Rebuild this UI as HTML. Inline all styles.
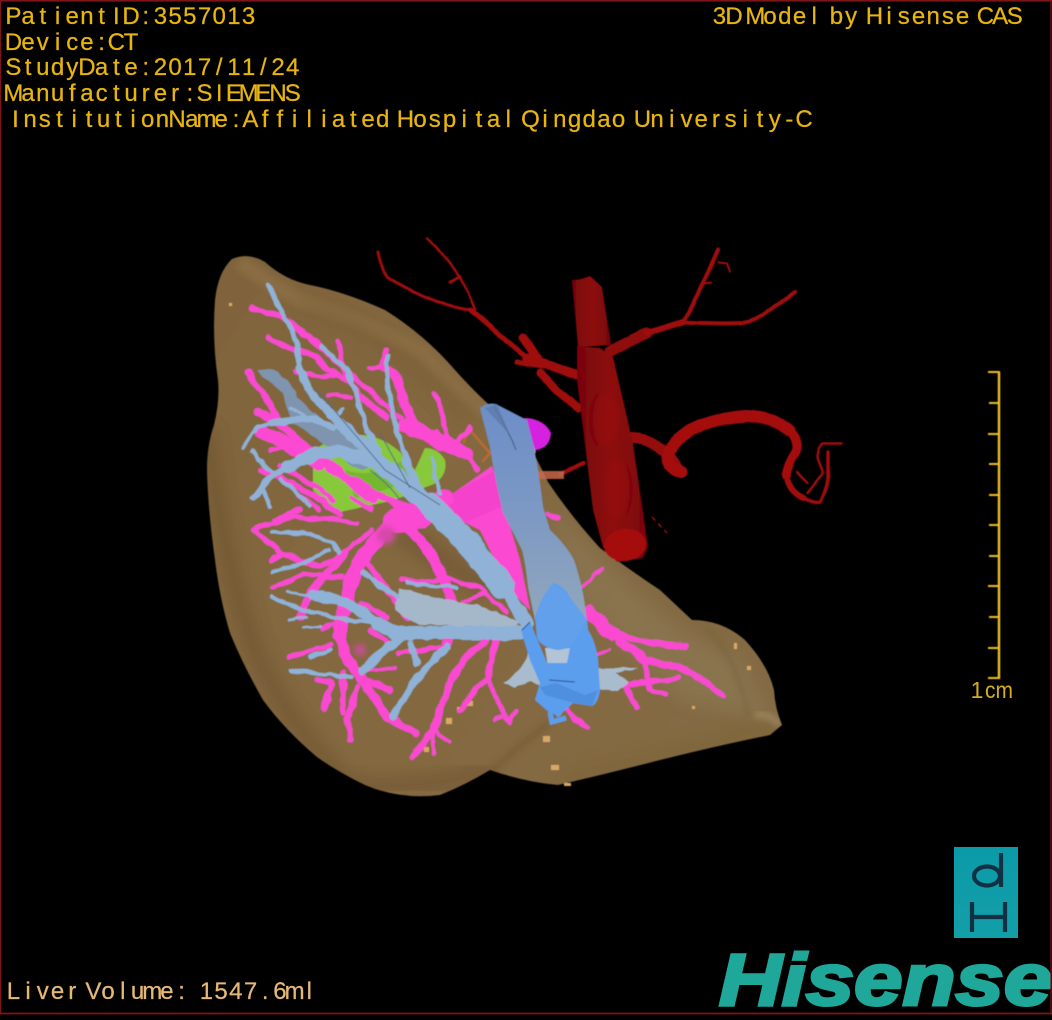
<!DOCTYPE html>
<html><head><meta charset="utf-8"><title>3D Model</title>
<style>
html,body{margin:0;padding:0;background:#000;width:1052px;height:1020px;overflow:hidden}
svg{display:block}
.t{font-family:"Liberation Sans",sans-serif;font-size:24px;fill:#e8b50e;stroke:#e8b50e;stroke-width:.25;text-anchor:middle}
.v{fill:none;stroke-linecap:round;stroke-linejoin:round}
</style></head><body>
<svg width="1052" height="1020" viewBox="0 0 1052 1020" xmlns="http://www.w3.org/2000/svg">
<defs>
<linearGradient id="lv" x1="0" y1="0" x2="1" y2="0.6"><stop offset="0" stop-color="#80643c"/><stop offset=".5" stop-color="#846840"/><stop offset="1" stop-color="#846b44"/></linearGradient>
<linearGradient id="ao" x1="0" y1="0" x2="1" y2="0"><stop offset="0" stop-color="#780608"/><stop offset=".5" stop-color="#8e090c"/><stop offset="1" stop-color="#7a0608"/></linearGradient>
<linearGradient id="ivc" x1="0" y1="0" x2="0" y2="1"><stop offset="0" stop-color="#6c8ec8"/><stop offset=".45" stop-color="#7b98c4"/><stop offset="1" stop-color="#93a8bc"/></linearGradient>
<linearGradient id="box" x1="0" y1="0" x2="0" y2="1"><stop offset="0" stop-color="#0b9aa8"/><stop offset="1" stop-color="#139fa8"/></linearGradient>
<clipPath id="lc"><path id="lp" d="M232 259 Q248 252 265 262 Q285 280 310 285 Q345 292 385 310 Q425 335 455 370 Q480 398 503 417 L522 432 Q535 455 548 482 Q570 515 600 548 Q630 570 660 590 L692 620 Q722 620 745 640 Q768 665 774 690 Q775 708 782 725 L770 735 Q720 745 660 760 Q610 773 558 785 Q525 782 490 770 Q465 785 440 795 Q400 800 365 785 Q338 772 317 757 Q285 730 263 700 Q243 665 230 633 Q220 600 215 560 Q208 510 207 470 Q207 445 214 425 Q220 400 218 380 Q212 340 215 300 Q218 272 232 259Z"/></clipPath>
<filter id="b8" x="-30%" y="-30%" width="160%" height="160%"><feGaussianBlur stdDeviation="8"/></filter>
<filter id="b3" x="-30%" y="-30%" width="160%" height="160%"><feGaussianBlur stdDeviation="3"/></filter>
<filter id="s"><feGaussianBlur stdDeviation=".45"/></filter>
<filter id="rough" x="0" y="0" width="1052" height="1020" filterUnits="userSpaceOnUse"><feTurbulence type="fractalNoise" baseFrequency=".07" numOctaves="2" seed="4"/><feDisplacementMap in="SourceGraphic" scale="6" xChannelSelector="R" yChannelSelector="G"/></filter>
<filter id="rough2" x="0" y="0" width="1052" height="1020" filterUnits="userSpaceOnUse"><feTurbulence type="fractalNoise" baseFrequency=".04" numOctaves="1" seed="7"/><feDisplacementMap in="SourceGraphic" scale="3" xChannelSelector="R" yChannelSelector="G"/></filter>
</defs>
<rect width="1052" height="1020" fill="#000"/>

<g filter="url(#s)">
<g class="v" stroke="#a00a0e" filter="url(#rough2)">
<path stroke-width="3" d="M378 252 Q380 266 388 277 Q410 292 437 302 Q455 307 470 310"/>
<path stroke-width="2.5" d="M427 238 Q445 255 457 273 Q466 285 470 297 L475 310"/>
<path stroke-width="3" d="M450 282 L460 276"/>
<path stroke-width="5" d="M470 310 Q485 322 497 333 L527 358"/>
<path stroke-width="9" d="M527 358 Q552 366 577 375"/>
<path stroke-width="5" d="M517 362 Q535 366 550 367"/>
<path stroke-width="9" d="M523 338 L530 347 L538 360"/>
<path stroke-width="8" d="M540 373 Q550 382 557 390 Q568 398 578 408"/>
<path stroke-width="11" d="M610 352 Q628 342 647 333" stroke="#900a0e"/>
<path stroke-width="6" d="M647 333 Q665 328 682 322"/>
<path stroke-width="4" d="M682 322 Q693 305 703 283 Q710 268 718 250"/>
<path stroke-width="4" d="M682 322 Q712 324 743 323 Q758 320 770 310 Q782 302 795 292"/>
<path stroke-width="2" d="M704 284 L711 283 M718 262 L727 263 L730 272"/>
<path stroke-width="11" d="M630 438 Q645 438 655 445 Q668 452 678 468" stroke="#960a0e"/>
<path stroke-width="12" d="M682 472 Q668 470 668 458 Q672 440 690 430 Q715 418 747 416 Q775 418 790 430" stroke="#a50c10"/>
<path stroke-width="9" d="M790 430 Q800 440 796 452 Q788 464 786 475" stroke="#a50c10"/>
<path stroke-width="6" d="M786 475 Q788 490 803 498"/>
<path stroke-width="3.5" d="M803 498 Q815 504 820 502 Q826 490 828 477 L828 452"/>
<path stroke-width="2.5" d="M817 457 Q818 446 823 443 L842 443 M817 457 L823 473 L807 493 M807 483 L797 472"/>
<path stroke-width="4" d="M560 474 L584 463" />
</g>

<use href="#lp" fill="url(#lv)"/>
<g clip-path="url(#lc)">
<path d="M240 262 Q270 285 300 300 Q360 320 420 350 Q455 385 490 415" fill="none" stroke="#8f7146" stroke-width="14" filter="url(#b3)" opacity=".7"/>
<path d="M305 300 Q370 330 420 375 Q445 395 470 425" fill="none" stroke="#7a6036" stroke-width="10" filter="url(#b8)" opacity=".7"/>
<path d="M207 430 Q222 560 255 650 Q290 730 350 785" fill="none" stroke="#664e2b" stroke-width="14" filter="url(#b8)" opacity=".6"/>
<path d="M350 785 Q430 790 490 770" fill="none" stroke="#6f5531" stroke-width="14" filter="url(#b8)" opacity=".8"/>
<path d="M490 772 Q520 745 550 722" fill="none" stroke="#745a34" stroke-width="6" filter="url(#b3)" opacity=".6"/>
<path d="M560 780 Q660 755 775 728" fill="none" stroke="#7c6034" stroke-width="10" filter="url(#b8)" opacity=".8"/>
<path d="M545 500 Q600 560 680 630 L740 660 L770 720 L680 700 L580 600Z" fill="#8d7a56" filter="url(#b8)" opacity=".6"/>
<path d="M705 626 Q738 660 748 715" fill="none" stroke="#75603a" stroke-width="3" filter="url(#b3)" opacity=".7"/>
<path d="M755 715 Q768 712 780 725" fill="none" stroke="#988158" stroke-width="7" filter="url(#b3)"/>
<path d="M400 530 Q440 560 490 590" fill="none" stroke="#6c5230" stroke-width="22" filter="url(#b8)" opacity=".6"/>
</g>
<path d="M512 475 L564 475" stroke="#c86a4c" stroke-width="8" opacity=".85"/>

<g fill="#d9a868">
<rect x="229" y="303" width="3" height="3"/><rect x="543" y="736" width="7" height="6"/><rect x="551" y="765" width="8" height="5"/><rect x="446" y="718" width="6" height="6"/><rect x="467" y="701" width="6" height="5"/><rect x="424" y="747" width="5" height="5"/><rect x="734" y="643" width="3" height="6"/><rect x="747" y="666" width="4" height="4"/><rect x="692" y="706" width="3" height="3"/><rect x="457" y="707" width="3" height="5"/><rect x="564" y="783" width="7" height="3"/><rect x="593" y="660" width="5" height="2"/>
</g>

<path d="M313 452 Q325 440 345 436 Q375 430 400 452 L415 470 L425 448 Q438 448 445 460 Q448 475 434 484 L418 490 L395 500 L340 512 Q318 495 313 490Z" fill="#88c83a"/>
<path d="M345 470 Q375 480 405 458 L412 478 Q385 492 355 498Z" fill="#75b82e"/>

<path class="v" d="M464 442 L468 428 L490 453 L483 461" stroke="#ba6a30" stroke-width="2.5"/>

<path d="M505 420 L527 418 Q545 420 551 433 Q550 446 540 449 L530 452Z" fill="#d422e0"/>
<path d="M505 418 L524 420 L536 452 L530 462Z" fill="#e884aa"/>

<path d="M455 492 L492 466 L505 510 L520 560 L530 610 L510 590 L480 530 L450 515Z" fill="#fb48d2"/>
<path d="M440 500 L500 468 L505 505 L460 525Z" fill="#f442cc"/>

<g class="v" stroke="#fb48d2" filter="url(#rough)">
<path stroke-width="6" d="M252 308 Q268 312 283 318 Q315 340 343 367 L357 393 Q370 405 387 417"/>
<path stroke-width="5" d="M283 318 Q320 345 357 380 L400 418"/>
<path stroke-width="6" d="M268 337 Q280 345 290 348 Q305 352 317 357 L328 370 L347 380"/>
<path stroke-width="5" d="M337 340 L340 352 L342 364"/>
<path stroke-width="5" d="M370 368 L383 365 L385 350 M295 372 Q320 378 345 377"/>
<path stroke-width="10" d="M384 366 Q398 372 402 395 Q408 418 420 432"/>
<path stroke-width="14" d="M405 426 Q430 435 452 447 L467 453"/>
<path stroke-width="5" d="M435 395 Q443 412 447 437 M447 437 L462 448 M467 455 L478 470 M458 441 L470 428 M436 432 L444 444"/>
<path stroke-width="7" d="M248 373 Q256 386 265 397 L278 418"/>
<path stroke-width="9" d="M258 412 L280 424 L307 450 L333 467 L373 500"/>
<path stroke-width="4" d="M327 395 L350 397 M270 450 L282 448"/>
<path stroke-width="12" d="M262 432 Q290 445 320 465"/>
<path stroke-width="6" d="M262 470 Q290 482 322 500 L340 515"/>
<path stroke-width="8" d="M330 470 Q370 490 400 505 L420 515"/>
<path stroke-width="5" d="M280 466 Q310 480 333 500 M350 498 L372 510 M298 495 L320 510"/>
<path stroke-width="18" d="M398 516 Q420 510 445 498"/>
<path stroke-width="26" d="M420 515 L397 520"/>
<path stroke-width="14" d="M395 520 L372 545 L357 565"/>
<path stroke-width="15" d="M357 565 L343 610 L340 635"/>
<path stroke-width="11" d="M340 635 L347 660 L363 680"/>
<path stroke-width="8" d="M363 680 Q375 700 387 717 L415 733"/>
<path stroke-width="10" d="M405 525 Q422 540 433 557 Q445 580 450 597 L457 617 L447 643"/>
<path stroke-width="5" d="M253 530 Q275 520 297 517 Q330 520 357 523 M273 520 L300 510"/>
<path stroke-width="5" d="M253 530 L270 543 L280 553 L320 567 Q335 560 347 550 L372 530"/>
<path stroke-width="5" d="M270 560 L284 554 M273 588 L303 575 L343 577"/>
<path stroke-width="7" d="M300 618 L310 593 L345 552"/>
<path stroke-width="6" d="M363 557 Q375 572 387 590 L407 617"/>
<path stroke-width="5" d="M290 657 L330 645 M323 628 L337 623 M360 603 L387 617 M370 630 L390 643 M397 653 L443 647"/>
<path stroke-width="4" d="M400 580 Q425 582 447 578 L480 588 L507 613 M457 613 L490 627 M463 602 L485 594"/>
<path stroke-width="7" d="M412 757 L433 730 Q443 705 450 680 L470 653 L487 640"/>
<path stroke-width="4" d="M433 730 L433 753 M433 728 L450 743"/>
<path stroke-width="6" d="M460 710 L487 677 L497 640"/>
<path stroke-width="5" d="M487 677 L497 700 L510 723 L516 710 M505 715 L495 720"/>
<path stroke-width="6" d="M350 740 L347 720 L358 687 M343 713 L343 673 M323 710 L333 683 L317 680 M363 680 L390 690"/>
<path stroke-width="4" d="M360 670 L395 668"/>
<path stroke-width="14" d="M590 612 Q600 625 613 634"/>
<path stroke-width="6" d="M613 634 Q650 644 686 646"/>
<path stroke-width="9" d="M620 642 L642 658"/>
<path stroke-width="6" d="M645 660 Q670 665 690 672 L722 695"/>
<path stroke-width="5" d="M645 660 L650 688 M652 690 L666 695 M625 687 L637 708 M628 685 L680 678"/>
<path stroke-width="5" d="M560 705 Q572 716 587 727"/>
<path stroke-width="3" d="M582 587 L603 568 M597 655 L610 650"/>
<path stroke-width="5" d="M547 513 L558 518"/>
</g>
<circle cx="386" cy="535" r="9" fill="#d648aa" filter="url(#b3)"/>
<circle cx="360" cy="650" r="6" fill="#d648aa" filter="url(#b3)" opacity=".8"/>

<g filter="url(#rough)">
<path d="M400 588 Q440 600 480 606 L520 622 L505 640 Q460 622 420 625 L395 610Z" fill="#a5b8c9"/>
<path d="M257 370 Q270 366 280 372 L300 400 L320 418 L345 432 L380 462 L360 470 L320 440 L292 422 L282 392Z" fill="#7f94ae"/>
</g>

<g class="v" stroke="#8fb2d6" filter="url(#rough)">
<path stroke-width="5" d="M268 285 L280 310 L297 340 L299 368"/>
<path stroke-width="8" d="M299 368 L310 393 L340 423"/>
<path stroke-width="12" d="M340 423 L367 450 L392 472"/>
<path stroke-width="18" d="M392 472 L413 493 L440 515"/>
<path stroke-width="24" d="M430 505 L470 545 L503 587"/>
<path stroke-width="14" d="M503 587 L527 623"/>
<path stroke-width="5" d="M388 357 L387 383 L397 430 L413 477"/>
<path stroke-width="7" d="M405 460 L420 490 L440 510"/>
<path stroke-width="5" d="M323 347 L347 370 L357 397 L367 430 L380 457"/>
<path stroke-width="3.5" d="M243 448 L257 427 L272 423"/>
<path stroke-width="7" d="M272 423 L310 418 L333 427"/>
<path stroke-width="3.5" d="M290 407 L310 418 M343 410 L335 418 L380 450"/>
<path stroke-width="12" d="M287 467 L317 453 L343 452 L377 463 L413 497"/>
<path stroke-width="6" d="M253 498 L270 478 L287 467"/>
<path stroke-width="4" d="M280 480 Q295 490 310 507 M252 452 L272 472 M263 487 L270 507 M432 458 L440 493"/>
<path stroke-width="4" d="M273 532 L310 533 L333 543 L340 553"/>
<path stroke-width="4" d="M273 572 L310 560 L330 550"/>
<path stroke-width="5" d="M363 573 L397 597"/>
<path stroke-width="10" d="M313 595 L347 603 L377 623"/>
<path stroke-width="14" d="M377 623 L397 633 L447 633 L520 633"/>
<path stroke-width="4" d="M272 597 L303 610 L340 618 L387 625"/>
<path stroke-width="3" d="M287 592 L313 595 M290 620 L306 617 M303 628 L320 626"/>
<path stroke-width="4" d="M290 670 L350 677 M310 657 L330 650"/>
<path stroke-width="9" d="M363 670 L387 647 L403 637"/>
<path stroke-width="7" d="M393 717 L417 677 L447 647"/>
<path stroke-width="6" d="M410 643 L417 663"/>
<path stroke-width="4" d="M407 583 L457 588"/>
</g>
<g fill="none" stroke="#4e6584" stroke-width=".9">
<path d="M317 390 L385 470 L440 505 M380 433 L410 488 M370 470 Q390 485 400 500"/>
</g>

<g filter="url(#rough)">
<path d="M503 683 L522 668 L530 650 L545 690 L530 680 L515 688Z" fill="#a9bccd"/>
<path d="M595 668 L637 668 L615 674 L630 682 L618 692 L600 690Z" fill="#a9bccd"/>
</g>
<path d="M545 648 L570 648 L567 667 L548 667Z" fill="#b2c4d6"/>

<path d="M480 408 Q488 402 496 404 L527 420 L534 447 Q540 480 543 507 L550 530 Q566 545 574 560 Q584 590 586 615 L587 627 L535 620 L528 587 Q526 565 522 550 Q512 530 503 513 Q495 480 490 447Z" fill="url(#ivc)"/>
<path d="M494 406 L512 440 L516 450" stroke="#3e5576" stroke-width="1" fill="none"/>
<path d="M485 408 L497 404 L503 418 L510 435 Z" fill="#5d7aa8" opacity=".75"/>

<path d="M535 617 Q542 595 553 583 Q563 585 570 597 L587 620 L588 630 Q596 642 598 660 L600 690 Q598 703 592 706 L573 703 L560 715 L550 713 L535 700 L540 683 L530 660 L521 630 L530 622 L547 663 L567 663 L570 648 L557 650 Q538 645 537 637Z" fill="#5c9eee"/>
<path d="M536 618 L537 637 Q542 648 557 650 Q568 650 574 640 L586 620 L570 597 L553 583 Q542 595 536 618Z" fill="#62a0ec"/>
<path d="M540 687 L556 683 L585 695 L598 690 L592 706 L570 702 L545 695Z" fill="#4f8fe0"/>
<path d="M549 680 L575 682 M522 630 L530 622" stroke="#264c86" stroke-width="1" fill="none"/>
<path d="M550 712 L552 722 L566 718 M556 712 L560 716" stroke="#5c9eee" stroke-width="5" fill="none"/>

<path d="M572 280 Q580 280 590 276 L602 287 L611 345 L578 347Z" fill="url(#ao)"/>
<path d="M577 346 L600 348 L613 357 L633 443 L648 547 L643 558 L617 562 L603 547 L593 510 L577 380Z" fill="url(#ao)"/>
<ellipse cx="625" cy="545" rx="21" ry="16" transform="rotate(-8 625 545)" fill="#a50a0e"/>
<ellipse cx="606" cy="420" rx="11" ry="26" fill="#a2141a" opacity=".35" filter="url(#b3)"/>
<ellipse cx="616" cy="490" rx="11" ry="30" fill="#a2141a" opacity=".35" filter="url(#b3)"/>
<path d="M652 517 L667 533" stroke="#a00c10" stroke-width="1.5" stroke-dasharray="5 4" fill="none"/>

<g stroke="#efc022" stroke-width="2">
<path d="M999 372 V679" stroke-width="2.4"/>
<path d="M988 372 H1000 M989 403 H999 M988 434 H999 M989 464 H999 M989 495 H999 M989 525 H999 M989 556 H999 M988 586 H999 M989 617 H999 M988 648 H999 M988 678 H1000"/>
</g>
</g>

<text x="977" y="698" font-family="'Liberation Sans',sans-serif" font-size="23" fill="#d4ad20" text-anchor="middle">1</text>
<text x="985" y="698" font-family="'Liberation Sans',sans-serif" font-size="23" fill="#d4ad20" textLength="28" lengthAdjust="spacingAndGlyphs">cm</text>

<text class="t" y="24" x="13.4 28.1 42.8 57.5 72.2 86.9 101.6 116.3 131 145.7 160.4 175.1 189.8 204.5 219.2 233.9 248.6">PatientID:3557013</text>
<text class="t" y="50" x="13.4 28.1 42.8 57.5 72.2 86.9 101.6 116.3 131">Device:CT</text>
<text class="t" y="75" x="13.4 28.1 42.8 57.5 72.2 86.9 101.6 116.3 131 145.7 160.4 175.1 189.8 204.5 219.2 233.9 248.6 263.3 278 292.7">StudyDate:2017/11/24</text>
<text class="t" y="101" x="13.4 28.1 42.8 57.5 72.2 86.9 101.6 116.3 131 145.7 160.4 175.1 189.8 204.5 219.2 233.9 248.6 263.3 278 292.7">Manufacturer:SIEMENS</text>
<text class="t" y="127" x="15.4 30.1 44.8 59.5 74.2 88.9 103.6 118.3 133 147.7 162.4 177.1 191.8 206.5 221.2 235.9">InstitutionName:</text>
<text class="t" y="127" x="250.4 265.1 279.8 294.5 309.2 323.9 338.6 353.3 368 382.7">Affiliated</text>
<text class="t" y="127" x="405.4 420.1 434.8 449.5 464.2 478.9 493.6 508.3">Hospital</text>
<text class="t" y="127" x="530.4 545.1 559.8 574.5 589.2 603.9 618.6">Qingdao</text>
<text class="t" y="127" x="642.4 657.1 671.8 686.5 701.2 715.9 730.6 745.3 760 774.7 789.4 804.1">University-C</text>
<text class="t" y="24" x="719.4 734.1">3D</text>
<text class="t" y="24" x="755.4 770.1 784.8 799.5 814.2">Model</text>
<text class="t" y="24" x="836.4 851.1">by</text>
<text class="t" y="24" x="874.4 889.1 903.8 918.5 933.2 947.9 962.6">Hisense</text>
<text class="t" y="24" x="985.4 1000.1 1014.8">CAS</text>
<text class="t" style="fill:#e6b877;stroke:#e6b877" y="999" x="13.4 28.1 42.8 57.5 72.2">Liver</text>
<text class="t" style="fill:#e6b877;stroke:#e6b877" y="999" x="93.4 108.1 122.8 137.5 152.2 166.9 181.6">Volume:</text>
<text class="t" style="fill:#e6b877;stroke:#e6b877" y="999" x="206.4 221.1 235.8 250.5 265.2 279.9 294.6 309.3">1547.6ml</text>

<rect x="954" y="847" width="64" height="91" fill="url(#box)"/>
<g fill="none" stroke="#103044" stroke-width="4.2">
<ellipse cx="987" cy="876" rx="13" ry="9.5"/>
<path d="M1001 853 V887"/>
<path d="M972 902 V932 M1005 902 V932 M972 917 H1005"/>
</g>

<text transform="translate(719 1005) scale(1.19 1)" font-family="'Liberation Sans',sans-serif" font-weight="700" font-style="italic" font-size="73" fill="#1fa89a" stroke="#1fa89a" stroke-width="3">Hisense</text>

<rect x="0" y="0" width="1052" height="1.6" fill="#7c1418"/>
<rect x="0" y="0" width="1.2" height="1014" fill="#7c1418"/>
<rect x="1050.4" y="0" width="1.2" height="1014" fill="#7c1418"/>
<rect x="0" y="1012.6" width="1052" height="1.8" fill="#7c1418"/>
</svg>
</body></html>
